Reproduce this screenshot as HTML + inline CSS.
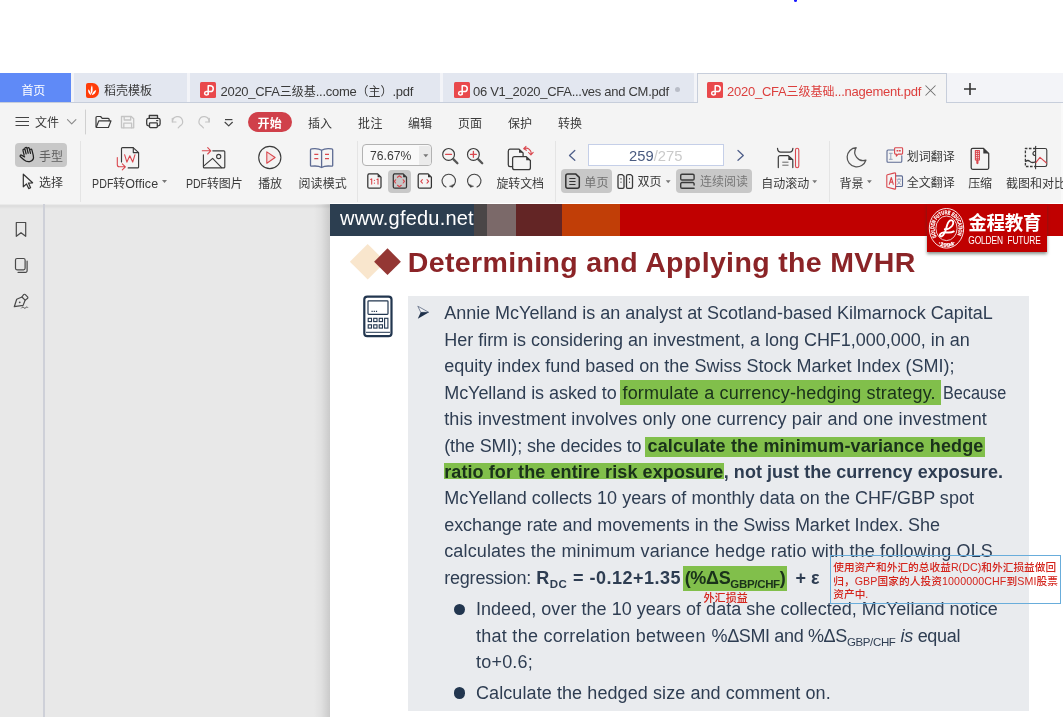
<!DOCTYPE html>
<html lang="zh">
<head>
<meta charset="utf-8">
<title>WPS PDF</title>
<style>
html,body{margin:0;padding:0;}
body{width:1063px;height:717px;overflow:hidden;position:relative;background:#fff;
  font-family:"Liberation Sans","Noto Sans CJK SC",sans-serif;font-size:12px;color:#3a3a3a;}
.abs{position:absolute;}
.t{position:absolute;white-space:nowrap;}
svg{position:absolute;overflow:visible;}
#tabbar{left:0;top:73px;width:1063px;height:29px;background:#f3f4f8;border-bottom:1px solid #c7cedb;}
.tab{position:absolute;top:0;height:29px;background:#e3e7f0;}
#tool{left:0;top:103px;width:1063px;height:100.500px;background:#f4f4f4;}
.sep{position:absolute;width:1px;background:#e4e4e4;top:141px;height:61px;}
.btnbg{position:absolute;background:#c8c8c8;border-radius:4px;}
#docbg{left:0;top:203.500px;width:1063px;height:514px;background:#e8e8e8;}
#page{left:330px;top:203.200px;width:733px;height:514px;background:#fff;}
.ln{position:absolute;white-space:nowrap;}
.sb{font-size:11.5px;position:relative;top:4px;}
.pdf{display:inline-block;font-size:12.5px;transform:scaleX(.85);transform-origin:0 50%;margin-right:-3.700px;}
.la{font-size:13px;letter-spacing:var(--ls);}
.hl{position:absolute;background:#8dd050;mix-blend-mode:multiply;}
b{font-weight:bold;}
</style>
</head>
<body>

<!-- top blue dot -->
<div class="abs" style="left:794px;top:-2px;width:3px;height:4px;border-radius:2px;background:#1a1aff;"></div>

<!-- ================= TAB BAR ================= -->
<div id="tabbar" class="abs">
  <div class="tab" style="left:0;width:71px;background:#5f8af7;"></div>
  <div class="tab" style="left:74px;width:113px;"></div>
  <div class="tab" style="left:190px;width:250px;"></div>
  <div class="tab" style="left:443px;width:251px;"></div>
  <div class="tab" style="left:697px;width:250px;height:30px;background:#f4f4f4;border:1px solid #c7cedb;border-bottom:none;box-sizing:border-box;"></div>
  <svg style="left:86px;top:10px;" width="13" height="15" viewBox="0 0 13 15"><path d="M2 0h4.500A6.500 6.500 0 0 1 13 6.500v2A6.500 6.500 0 0 1 6.500 15H2a2 2 0 0 1-2-2V2a2 2 0 0 1 2-2z" fill="#ff3d0a"/><path d="M5.500 11.300C4.300 8.300 4.600 5 5.900 2.300 7 5.200 6.900 8.400 5.500 11.300z" fill="#fff"/><path d="M5 12.200C3 11.300 1.900 9 2.100 6.300 3.900 7.600 5 9.700 5 12.200z" fill="#fff"/><path d="M5.700 12.200C6.300 9.600 7.800 7.800 10.200 6.900 9.900 9.600 8.300 11.500 5.700 12.200z" fill="#fff"/></svg>
  <svg style="left:200px;top:9px;" width="16" height="16" viewBox="0 0 16 16"><rect width="16" height="16" rx="1.500" fill="#e9494c"/><path d="M8.200 12.600V3.700h2.100a2.950 2.950 0 0 1 0 5.900H6.300a1.750 1.750 0 1 0 1.800 1.900" fill="none" stroke="#fff" stroke-width="1.500" stroke-linecap="round" stroke-linejoin="round"/></svg>
  <svg style="left:454px;top:9px;" width="16" height="16" viewBox="0 0 16 16"><rect width="16" height="16" rx="1.500" fill="#e9494c"/><path d="M8.200 12.600V3.700h2.100a2.950 2.950 0 0 1 0 5.900H6.300a1.750 1.750 0 1 0 1.800 1.900" fill="none" stroke="#fff" stroke-width="1.500" stroke-linecap="round" stroke-linejoin="round"/></svg>
  <div class="abs" style="left:675px;top:14px;width:5px;height:5px;border-radius:3px;background:#b9bdc7;"></div>
  <svg style="left:707px;top:9px;" width="16" height="16" viewBox="0 0 16 16"><rect width="16" height="16" rx="1.500" fill="#e9494c"/><path d="M8.200 12.600V3.700h2.100a2.950 2.950 0 0 1 0 5.900H6.300a1.750 1.750 0 1 0 1.800 1.900" fill="none" stroke="#fff" stroke-width="1.500" stroke-linecap="round" stroke-linejoin="round"/></svg>
  <svg style="left:925px;top:11.600px;" width="11" height="11" viewBox="0 0 11 11"><path d="M0.500 0.500l10 10M10.500 0.500l-10 10" stroke="#707070" stroke-width="1.050" fill="none"/></svg>
  <svg style="left:964px;top:10px;" width="12" height="12" viewBox="0 0 12 12"><path d="M6 0v12M0 6h12" stroke="#333" stroke-width="1.600" fill="none"/></svg>
</div>
<div class="t" id="tt1" style="left:21.60px;top:82.68px;font-size:12px;line-height:16px;height:16px;color:#fff;letter-spacing:-0.308px;">首页</div>
<div class="t" id="tt2" style="left:104.00px;top:83.28px;font-size:12px;line-height:16px;height:16px;color:#3a3a3a;">稻壳模板</div>
<div class="t" id="tt3" style="left:220.50px;top:83.58px;font-size:12px;line-height:16px;height:16px;color:#3a3a3a;--ls:-0.278px;"><span class="la">2020_CFA</span>三级基<span class="la">...come</span>（主）<span class="la">.pdf</span></div>
<div class="t" id="tt4" style="left:473.00px;top:83.58px;font-size:12px;line-height:16px;height:16px;color:#3a3a3a;--ls:-0.284px;"><span class="la">06 V1_2020_CFA...ves and CM.pdf</span></div>
<div class="t" id="tt5" style="left:727.00px;top:83.58px;font-size:12px;line-height:16px;height:16px;color:#dc3f3d;--ls:-0.252px;"><span class="la">2020_CFA</span>三级基础<span class="la">...nagement.pdf</span></div>

<!-- ================= MENU + TOOLBAR ================= -->
<div id="tool" class="abs"></div>
<svg style="left:0;top:103px;" width="300" height="40" viewBox="0 103 300 40" fill="none" stroke-linecap="round" stroke-linejoin="round">
  <path d="M15.500 117.500h13.500M15.500 121.500h13.500M15.500 125.500h13.500" stroke="#444" stroke-width="1.150" stroke-linecap="butt"/>
  <path d="M67.500 119.700l4.200 4.200 4.200-4.200" stroke="#8a8a8a" stroke-width="1.100"/>
  <path d="M85.500 110v24" stroke="#d0d0d0" stroke-width="1"/>
  <!-- open -->
  <path d="M96 126.500v-9a1 1 0 0 1 1-1h3.600l1.600 1.900h6a1 1 0 0 1 1 1v1.300" stroke="#3a3a3a" stroke-width="1.200"/>
  <path d="M96.200 127.500l2.600-6.600h12.200l-2.600 6.600z" stroke="#3a3a3a" stroke-width="1.200"/>
  <!-- save (disabled) -->
  <path d="M121.500 116.500h9.700l2.500 2.300v9h-12.200z" stroke="#c4c4c4" stroke-width="1.300"/>
  <path d="M124.200 116.800v3.200h6.500v-3.200M123.800 127.800v-4.600h7.800v4.600" stroke="#c4c4c4" stroke-width="1.300"/>
  <!-- print -->
  <rect x="146.700" y="118.300" width="13.400" height="7.600" rx="1.800" stroke="#3a3a3a" stroke-width="1.300"/>
  <path d="M149.300 118v-2.500h8.200v2.500" stroke="#3a3a3a" stroke-width="1.300"/>
  <rect x="149.500" y="122.800" width="7.800" height="4.800" rx=".8" fill="#f4f4f4" stroke="#3a3a3a" stroke-width="1.300"/>
  <path d="M156.600 120.600h1.200" stroke="#3a3a3a" stroke-width="1.200"/>
  <!-- undo -->
  <path d="M172.300 118.300v3.700h3.700" stroke="#c4c4c4" stroke-width="1.200"/>
  <path d="M172.600 121.800a5 5 0 1 1 7.200 4.300l-1.600 1.800" stroke="#c4c4c4" stroke-width="1.200"/>
  <!-- redo -->
  <path d="M209.300 118.300v3.700h-3.700" stroke="#c4c4c4" stroke-width="1.200"/>
  <path d="M209 121.800a5 5 0 1 0-7.200 4.300l1.600 1.800" stroke="#c4c4c4" stroke-width="1.200"/>
  <!-- more -->
  <path d="M225 119.600h7.400" stroke="#444" stroke-width="1.200" stroke-linecap="butt"/>
  <path d="M225 122.300l3.700 3.600 3.700-3.600" stroke="#444" stroke-width="1.200"/>
</svg>
<div class="abs" style="left:248px;top:112px;width:44px;height:20px;border-radius:10px;background:#d0404a;"></div>
<div class="t" id="m0" style="left:35.00px;top:114.88px;font-size:12px;line-height:16px;height:16px;color:#3a3a3a;letter-spacing:-0.008px;">文件</div>
<div class="t" id="m1" style="left:257.60px;top:115.58px;font-size:12px;line-height:16px;height:16px;color:#fff;letter-spacing:0.192px;font-weight:bold;">开始</div>
<div class="t" id="m2" style="left:308.00px;top:115.88px;font-size:12px;line-height:16px;height:16px;color:#3a3a3a;letter-spacing:-0.008px;">插入</div>
<div class="t" id="m3" style="left:358.00px;top:115.88px;font-size:12px;line-height:16px;height:16px;color:#3a3a3a;letter-spacing:0.492px;">批注</div>
<div class="t" id="m4" style="left:408.00px;top:115.88px;font-size:12px;line-height:16px;height:16px;color:#3a3a3a;letter-spacing:-0.008px;">编辑</div>
<div class="t" id="m5" style="left:458.00px;top:115.88px;font-size:12px;line-height:16px;height:16px;color:#3a3a3a;letter-spacing:-0.008px;">页面</div>
<div class="t" id="m6" style="left:508.00px;top:115.88px;font-size:12px;line-height:16px;height:16px;color:#3a3a3a;letter-spacing:-0.008px;">保护</div>
<div class="t" id="m7" style="left:558.00px;top:115.88px;font-size:12px;line-height:16px;height:16px;color:#3a3a3a;letter-spacing:-0.008px;">转换</div>

<div class="btnbg" style="left:15px;top:143px;width:52px;height:24px;"></div>
<div class="btnbg" style="left:388px;top:169.500px;width:23px;height:23px;"></div>
<div class="btnbg" style="left:560.700px;top:169.300px;width:51.700px;height:23.600px;"></div>
<div class="btnbg" style="left:675.700px;top:169px;width:76px;height:24px;"></div>
<div class="abs" style="left:1061px;top:103px;width:2px;height:100px;background:#f9f9f9;"></div>
<div class="sep" style="left:80px;"></div>
<div class="sep" style="left:357px;"></div>
<div class="sep" style="left:554.500px;"></div>
<div class="sep" style="left:829px;"></div>
<!-- zoom combo -->
<div class="abs" style="left:362px;top:144.200px;width:70.200px;height:21.500px;box-sizing:border-box;border:1.200px solid #b2b2b2;border-radius:4px;background:#f9f9f9;"></div>
<div class="abs" style="left:418.500px;top:145.500px;width:12.500px;height:19px;background:#ebebeb;border-radius:0 3px 3px 0;"></div>
<!-- page box -->
<div class="abs" style="left:588.200px;top:144.300px;width:135.400px;height:21.300px;box-sizing:border-box;border:1px solid #c5cfe8;background:#fff;"></div>

<svg style="left:0;top:138px;" width="1063" height="64" viewBox="0 138 1063 64" fill="none" stroke-linecap="round" stroke-linejoin="round" stroke-width="1.150">
  <!-- hand -->
  <g stroke="#222" stroke-width="1.250" transform="rotate(-14 27 155)">
    <path d="M24.200 154.500v-4.800a1.100 1.100 0 0 1 2.200 0v4M26.400 153.500v-5a1.100 1.100 0 0 1 2.200 0v5M28.600 153.600v-4.300a1.100 1.100 0 0 1 2.200 0v4.700M30.800 154.200v-2.800a1.100 1.100 0 0 1 2.200 0v5.400c0 3.200-2 5.200-5 5.200-2.600 0-3.800-1.200-5.200-3.200l-2.600-3.700c-.7-1 .7-2.100 1.600-1.200l2.400 2.300"/>
  </g>
  <!-- cursor -->
  <path d="M23.300 174.200v12.600l3.200-2.900 2.200 4.700 1.900-.9-2.200-4.600 4.200-.3z" stroke="#333" stroke-width="1.200"/>
  <!-- PDF to Office -->
  <path d="M121.500 162v-13.400a1 1 0 0 1 1-1h10.600l5.500 5v14.300a1 1 0 0 1-1 1h-9.400" stroke="#3a3a3a"/>
  <path d="M133.300 147.900v4.700h5" stroke="#3a3a3a"/>
  <path d="M124.600 154.700l2.300 7.400 2.900-6.400 2.900 6.400 2.300-7.400" stroke="#d9474e" stroke-width="1.100"/>
  <path d="M117.300 157.500v7.300a2 2 0 0 0 2 2h5.800M122.300 163.800l3.100 3-3.100 3" stroke="#d9474e" stroke-width="1.100"/>
  <!-- PDF to image -->
  <path d="M203.400 154.800v12.100a1 1 0 0 0 1 1h19.400a1 1 0 0 0 1-1v-15.100a1 1 0 0 0-1-1h-11" stroke="#3a3a3a"/>
  <circle cx="218.700" cy="156.500" r="2.100" stroke="#3a3a3a" stroke-width="1.100"/>
  <path d="M203.600 166.200l9-7.900 9 9.400" stroke="#3a3a3a" stroke-width="1.100"/>
  <path d="M202.300 150.800h8M207.700 147.600l3.100 3.200-3.100 3.200" stroke="#d9474e" stroke-width="1.100"/>
  <!-- play -->
  <circle cx="269.800" cy="157.500" r="11.100" stroke="#3a3a3a" stroke-width="1.100"/>
  <path d="M266.800 151.900v11.300l8.300-5.700z" stroke="#d9474e" stroke-width="1.100" fill="#f3dfdf"/>
  <!-- reading mode -->
  <path d="M321.600 150.300c-2.500-1.700-6.500-1.900-10.200-1.400a1 1 0 0 0-.9 1v15.300a1 1 0 0 0 1.100 1c3.400-.4 7.600-.2 10 1.300 2.400-1.500 6.600-1.700 10-1.300a1 1 0 0 0 1.100-1v-15.300a1 1 0 0 0-.9-1c-3.700-.5-7.700-.3-10.200 1.400zM321.600 150.500v16.800" stroke="#5d6b93" stroke-width="1.300"/>
  <path d="M314.300 154.300h4M314.300 158.700h4M325 154.300h4M325 158.700h4" stroke="#d9474e" stroke-width="1.300" stroke-linecap="butt"/>
  <!-- zoom dropdown arrow -->
  <path d="M423.300 154.300h5l-2.500 3z" fill="#777" stroke="none"/>
  <!-- zoom out / in -->
  <circle cx="448.600" cy="154.400" r="5.900" stroke="#3a3a3a"/><path d="M453.300 159.100l4.100 4.100" stroke="#555" stroke-width="2.300"/>
  <path d="M445.700 154.400h5.800" stroke="#d9474e" stroke-width="1.300"/>
  <circle cx="473.400" cy="154.400" r="5.900" stroke="#3a3a3a"/><path d="M478.100 159.100l4.100 4.100" stroke="#555" stroke-width="2.300"/>
  <path d="M470.500 154.400h5.800M473.400 151.500v5.800" stroke="#d9474e" stroke-width="1.300"/>
  <!-- 1:1 -->
  <path d="M368.7 173.900h9l3.300 3.200v9.600a1.500 1.500 0 0 1-1.500 1.500h-10.200a1.500 1.500 0 0 1-1.500-1.500v-11.300a1.500 1.500 0 0 1 1.500-1.500z" stroke="#333" stroke-width="1.250"/><path d="M377.6 174.100v3.200h3.200z" fill="#333" stroke="none"/>
  <path d="M370.700 179.500l1-.6v5.200M377 179.500l1-.6v5.200M374.400 180.200v.2M374.400 183v.2" stroke="#d9474e" stroke-width="1.100"/>
  <!-- fit page (selected) -->
  <path d="M394.2 173.900h9l3.300 3.200v9.600a1.500 1.500 0 0 1-1.500 1.500h-10.200a1.500 1.500 0 0 1-1.500-1.500v-11.300a1.500 1.500 0 0 1 1.500-1.500z" stroke="#333" stroke-width="1.250"/><path d="M403.1 174.100v3.200h3.200z" fill="#333" stroke="none"/>
  <path d="M397.500 177.300l1.900-1.500 1.900 1.500M397.500 185.300l1.900 1.500 1.900-1.500M395.600 179.800l-1.300 1.600 1.300 1.600M403.200 179.800l1.300 1.600-1.300 1.600" stroke="#d9474e" stroke-width="1.100"/>
  <!-- fit width -->
  <path d="M419.1 173.900h9l3.300 3.200v9.600a1.500 1.500 0 0 1-1.500 1.500h-10.200a1.500 1.500 0 0 1-1.500-1.500v-11.300a1.500 1.500 0 0 1 1.500-1.500z" stroke="#333" stroke-width="1.250"/><path d="M428.0 174.100v3.200h3.200z" fill="#333" stroke="none"/>
  <path d="M422.400 179.600l-1.600 1.800 1.600 1.800M427 179.600l1.600 1.800-1.600 1.800" stroke="#d9474e" stroke-width="1.100"/>
  <!-- rotate ccw / cw -->
  <path d="M452.300 186.600a6.700 6.700 0 1 0-6.300.4" stroke="#444" stroke-width="1.100"/><path d="M453.600 184.600l-1.100 2.700-2.800-.9z" fill="#444" stroke="#444" stroke-width=".5"/>
  <path d="M470.700 186.600a6.700 6.700 0 1 1 6.300.4" stroke="#444" stroke-width="1.100"/><path d="M469.400 184.600l1.100 2.700 2.800-.9z" fill="#444" stroke="#444" stroke-width=".5"/>
  <!-- rotate doc -->
  <path d="M512.600 166.700h-2.300a2 2 0 0 1-2-2v-13.500a2 2 0 0 1 2-2h8.800l4 3.800v3.300" stroke="#3a3a3a" stroke-width="1.250"/>
  <path d="M514.600 156.500h11.400l4.400 4v7.200a2 2 0 0 1-2 2h-13.800a2 2 0 0 1-2-2v-9.200a2 2 0 0 1 2-2z" stroke="#3a3a3a" stroke-width="1.250"/>
  <path d="M526.200 156.700v3.600h4z" fill="#3a3a3a" stroke="none"/>
  <path d="M519 149.400v3.400h3.900z" fill="#3a3a3a" stroke="none"/>
  <path d="M524 148.700a4.900 4.900 0 0 1 6.900 5.700M526 146.400l-2.300 2.300 2.700 1.600M528.600 152.500l2.300 2.500 2.300-2.600" stroke="#d9474e" stroke-width="1.100"/>
  <!-- page nav -->
  <path d="M574.800 150.500l-5.300 4.900 5.300 4.900" stroke="#4f5f8a" stroke-width="1.300"/>
  <path d="M738 150.500l5.300 4.900-5.300 4.900" stroke="#4f5f8a" stroke-width="1.300"/>
  <!-- single page -->
  <path d="M567.800 173.900h7.800l3.700 3.500v8.800a2 2 0 0 1-2 2h-9.500a2 2 0 0 1-2-2v-10.300a2 2 0 0 1 2-2z" stroke="#333" stroke-width="1.500"/>
  <path d="M569.300 178.500h6.200M569.300 181.500h6.200M569.300 184.500h6.200" stroke="#333" stroke-width="1.200" stroke-linecap="butt"/>
  <!-- double page -->
  <path d="M618 176.300a1.700 1.700 0 0 1 1.700-1.700h2.600l1.700 1.600v10.800a1.300 1.300 0 0 1-1.300 1.300h-3.400a1.300 1.300 0 0 1-1.300-1.300zM626.500 176.300a1.700 1.700 0 0 1 1.700-1.700h2.600l1.700 1.600v10.800a1.300 1.300 0 0 1-1.300 1.300h-3.400a1.300 1.300 0 0 1-1.300-1.300z" stroke="#3a3a3a" stroke-width="1.300"/>
  <path d="M621 178.700v.2M621 182v.2M629.500 178.700v.2M629.500 182v.2" stroke="#3a3a3a" stroke-width="1.200"/>
  <path d="M665.800 180.300h4.800l-2.400 2.900z" fill="#777" stroke="none"/>
  <!-- continuous -->
  <rect x="680.700" y="174.200" width="13.400" height="5.800" rx="1.300" stroke="#3a3a3a" stroke-width="1.400"/>
  <path d="M694.100 188.300h-12.100a1.300 1.300 0 0 1-1.300-1.300v-3.200a1.300 1.300 0 0 1 1.300-1.300h10.800a1.300 1.300 0 0 1 1.300 1.300v1.300" stroke="#3a3a3a" stroke-width="1.400"/>
  <!-- auto scroll -->
  <path d="M777.500 148.400c.3 2.700 1.400 3.800 3.200 3.800h9c1.800 0 2.900-1.100 3.200-3.800" stroke="#3a3a3a" stroke-width="1.200"/>
  <path d="M778.300 167.600v-10.300a1.700 1.700 0 0 1 1.700-1.700h8.300l4.500 4.200v7.800" stroke="#3a3a3a" stroke-width="1.200"/>
  <path d="M788.300 155.800v4.200h4.300z" fill="#3a3a3a" stroke="none"/>
  <path d="M782.300 162.200h6.200M782.300 165.200h6.200" stroke="#666" stroke-width="1" stroke-linecap="butt"/>
  <rect x="795.500" y="148.300" width="3.300" height="19.400" rx="1.650" stroke="#d9474e" stroke-width="1.100"/>
  <path d="M812.300 180.300h4.800l-2.400 2.900z" fill="#777" stroke="none"/>
  <!-- background (moon) -->
  <path d="M856.200 147.700a9.600 9.600 0 1 0 9.700 12.500 8.400 8.400 0 0 1-9.700-12.500z" stroke="#555" stroke-width="1.250"/>
  <path d="M867 180.300h4.800l-2.400 2.900z" fill="#777" stroke="none"/>
  <!-- word translate -->
  <path d="M893.800 150h-5.800a1 1 0 0 0-1 1v10.300a1 1 0 0 0 1 1h12.800a1 1 0 0 0 1-1v-5.500" stroke="#5d6b93" stroke-width="1.100"/>
  <path d="M889.300 153.300h3M889.300 159.300h3M890.800 153.300v6" stroke="#9aa4bb" stroke-width="1"/>
  <path d="M895.400 147.700h6.400a.8.800 0 0 1 .8.800v4.800a.8.800 0 0 1-.8.800h-3.600l-1.900 2v-2h-.9a.8.800 0 0 1-.8-.8v-4.800a.8.800 0 0 1 .8-.8z" stroke="#d9474e" stroke-width="1.100" fill="#f4f4f4"/>
  <path d="M897.300 150.700h.3M899.700 150.700h.3" stroke="#d9474e" stroke-width="1.500" stroke-linecap="square"/>
  <!-- full translate -->
  <path d="M895.500 175.900h6a1 1 0 0 1 1 1v8.600a1 1 0 0 1-1 1h-6" stroke="#5d6b93" stroke-width="1.100"/>
  <path d="M897 179.300h4M899 178.400v.9M897.600 180.700c.5 1.700 1.500 2.800 3.200 3.600M900.400 180.700c-.5 1.700-1.500 2.800-3.200 3.600" stroke="#8a96b3" stroke-width=".8"/>
  <path d="M887.400 174.700l7.300-1.800a.7.700 0 0 1 .9.700v14.800a.7.700 0 0 1-.9.700l-7.300-1.800a.8.800 0 0 1-.6-.8v-11a.8.800 0 0 1 .6-.8z" stroke="#d9474e" stroke-width="1.100" fill="#f4f4f4"/>
  <path d="M889.300 184.300l2-6.800 2 6.800M890 182.100h2.700" stroke="#d9474e" stroke-width="1.100"/>
  <!-- compress -->
  <path d="M972.700 148.300h10.600l5.400 5.200v14.300a1.500 1.500 0 0 1-1.500 1.500h-14.500a1.500 1.500 0 0 1-1.500-1.500v-18a1.500 1.500 0 0 1 1.500-1.500z" stroke="#3a3a3a" stroke-width="1.250"/>
  <path d="M983.300 148.600v5h5.200z" fill="#3a3a3a" stroke="none"/>
  <rect x="975.400" y="150.600" width="4" height="9.400" stroke="#d9474e" stroke-width="1.100"/>
  <path d="M975.400 152.600h4M975.400 154.500h4M975.400 156.400h4M975.400 158.300h4M977.400 150.600v9.400" stroke="#d9474e" stroke-width=".9" stroke-linecap="butt"/>
  <path d="M977.400 160.300v2.800" stroke="#d9474e" stroke-width="2.200"/>
  <!-- screenshot & compare -->
  <path d="M1035.600 148.500h-10.200v18h10.200" stroke="#3a3a3a" stroke-width="1.300" stroke-dasharray="2.600 1.500" stroke-linecap="butt"/>
  <path d="M1035.600 148.500h9.500a1.700 1.700 0 0 1 1.700 1.700v14.600a1.700 1.700 0 0 1-1.700 1.700h-9.500" stroke="#3a3a3a" stroke-width="1.100"/>
  <path d="M1035.600 146.200v22.600" stroke="#3a3a3a" stroke-width="1.100"/>
  <path d="M1035.400 151.500a2 2 0 1 0 0 3.900" stroke="#3a3a3a" stroke-width="1.200"/>
  <path d="M1025.600 161.600c1.700-1.600 2.900-1.500 4.200-.2s3 1.500 5.600.4" stroke="#3a3a3a" stroke-width="1.300"/>
  <path d="M1036 162.300l4-5 6.500 5.700" stroke="#d9474e" stroke-width="1.100"/>
</svg>
<div class="t" id="b1" style="left:39.00px;top:149.18px;font-size:12px;line-height:16px;height:16px;color:#5e5e5e;letter-spacing:-0.008px;">手型</div>
<div class="t" id="b2" style="left:39.00px;top:175.28px;font-size:12px;line-height:16px;height:16px;color:#3a3a3a;letter-spacing:-0.008px;">选择</div>
<div class="t" id="b3" style="left:91.70px;top:176.08px;font-size:12px;line-height:16px;height:16px;color:#3a3a3a;letter-spacing:0.075px;"><span class="pdf">PDF</span>转<span style="font-size:12.5px">Office</span></div>
<svg style="left:162px;top:180px;" width="5" height="3" viewBox="0 0 5 3"><path d="M0 0h5l-2.500 3z" fill="#777"/></svg>
<div class="t" id="b4" style="left:186.00px;top:176.08px;font-size:12px;line-height:16px;height:16px;color:#3a3a3a;letter-spacing:-0.121px;"><span class="pdf">PDF</span>转图片</div>
<div class="t" id="b5" style="left:258.20px;top:176.08px;font-size:12px;line-height:16px;height:16px;color:#3a3a3a;letter-spacing:-0.108px;">播放</div>
<div class="t" id="b6" style="left:298.50px;top:176.08px;font-size:12px;line-height:16px;height:16px;color:#3a3a3a;letter-spacing:0.071px;">阅读模式</div>
<div class="t" id="b7" style="left:369.70px;top:147.52px;font-size:13.5px;line-height:16px;height:16px;color:#3a3a3a;transform:scaleX(0.9018);transform-origin:0 50%;">76.67%</div>
<div class="t" id="b8" style="left:496.50px;top:176.08px;font-size:12px;line-height:16px;height:16px;color:#3a3a3a;letter-spacing:-0.129px;">旋转文档</div>
<div class="t" id="b9" style="left:628.80px;top:146.80px;font-size:15px;line-height:18px;height:18px;color:#4a5b80;transform:scaleX(0.9846);transform-origin:0 50%;"><span style="color:#4a5b80">259</span><span style="color:#cacaca">/275</span></div>
<div class="t" id="b10" style="left:584.30px;top:174.58px;font-size:12px;line-height:16px;height:16px;color:#707070;letter-spacing:0.142px;">单页</div>
<div class="t" id="b11" style="left:637.50px;top:174.28px;font-size:12px;line-height:16px;height:16px;color:#3a3a3a;letter-spacing:0.092px;">双页</div>
<div class="t" id="b12" style="left:699.90px;top:174.28px;font-size:12px;line-height:16px;height:16px;color:#777;letter-spacing:0.021px;">连续阅读</div>
<div class="t" id="b13" style="left:761.30px;top:176.08px;font-size:12px;line-height:16px;height:16px;color:#3a3a3a;letter-spacing:-0.029px;">自动滚动</div>
<div class="t" id="b14" style="left:839.60px;top:175.78px;font-size:12px;line-height:16px;height:16px;color:#3a3a3a;letter-spacing:-0.058px;">背景</div>
<div class="t" id="b15" style="left:906.70px;top:148.78px;font-size:12px;line-height:16px;height:16px;color:#3a3a3a;letter-spacing:0.046px;">划词翻译</div>
<div class="t" id="b16" style="left:906.70px;top:174.98px;font-size:12px;line-height:16px;height:16px;color:#3a3a3a;letter-spacing:0.046px;">全文翻译</div>
<div class="t" id="b17" style="left:968.30px;top:176.08px;font-size:12px;line-height:16px;height:16px;color:#3a3a3a;letter-spacing:-0.258px;">压缩</div>
<div class="t" id="b18" style="left:1006.00px;top:176.08px;font-size:12px;line-height:16px;height:16px;color:#3a3a3a;">截图和对比</div>

<!-- ================= DOCUMENT AREA ================= -->
<div id="docbg" class="abs"></div>
<div class="abs" style="left:0;top:203.500px;width:1063px;height:5px;background:linear-gradient(#f0f0f0 0%,#dbdbdb 35%,#e8e8e8 100%);"></div>
<div class="abs" style="left:43.200px;top:204px;width:2px;height:513px;background:#ced0d8;"></div>
<svg style="left:0;top:204px;" width="44" height="120" viewBox="0 204 44 120" fill="none" stroke="#4a4a4a" stroke-width="1.200" stroke-linejoin="round" stroke-linecap="round">
  <path d="M16.300 222.500h9.400v13.800l-4.700-3.600-4.700 3.600z"/>
  <rect x="15.500" y="258.500" width="9.600" height="11.300" rx="1.500"/>
  <path d="M18 272.300h7.600a1.500 1.500 0 0 0 1.500-1.500v-9.600"/>
  <path d="M14.300 306.700l2.400-7.500 5.200-2.200 3.200 3.200-2 5.200z"/>
  <path d="M21.900 297l1.700-2.300a1.200 1.200 0 0 1 1.800-.1l2.100 2.200a1.200 1.200 0 0 1-.1 1.800l-2.300 1.600"/>
  <circle cx="19.700" cy="302.300" r=".9" fill="#4a4a4a" stroke="none"/>
  <path d="M21.500 308c.9-1.300 1.700-1.300 2.300-.4s1.500 1 2.100 0 1.200-1 1.700-.3" stroke-width="1"/>
</svg>

<div class="abs" style="left:314px;top:204px;width:16px;height:513px;background:linear-gradient(to right,rgba(0,0,0,0),rgba(0,0,0,.035) 45%,rgba(0,0,0,.13));"></div>
<div id="page" class="abs"></div>
<!-- slide header band -->
<div class="abs" style="left:330px;top:204.300px;width:144px;height:31.300px;background:#2c3e50;"></div>
<div class="abs" style="left:474px;top:204.300px;width:13px;height:31.300px;background:#4a4647;"></div>
<div class="abs" style="left:487px;top:204.300px;width:29px;height:31.300px;background:#7b6969;"></div>
<div class="abs" style="left:516px;top:204.300px;width:46px;height:31.300px;background:#632525;"></div>
<div class="abs" style="left:562px;top:204.300px;width:58px;height:31.300px;background:#c13e07;"></div>
<div class="abs" style="left:620px;top:204.300px;width:443px;height:31.300px;background:#c00000;"></div>
<div class="t" id="www" style="left:340.00px;top:204.87px;font-size:20px;line-height:26px;height:26px;color:#fff;letter-spacing:0.200px;">www.gfedu.net</div>
<!-- logo -->
<div class="abs" style="left:927px;top:204.300px;width:120px;height:47.500px;background:#c00000;box-shadow:0 2px 3px rgba(40,60,50,.55);"></div>
<svg style="left:927px;top:204px;" width="40" height="48" viewBox="927 204 40 48" fill="none">
  <ellipse cx="946.500" cy="228.300" rx="17.200" ry="19.800" stroke="#fff" stroke-width=".9"/>
  <ellipse cx="946.500" cy="228.300" rx="10.600" ry="12.300" stroke="#fff" stroke-width=".8"/>
  <path id="ringtop" d="M936.840 236.790A12.100 14.100 0 1 1 956.760 235.770"/>
  <path id="ringbot" d="M937.50 243.72A16.1 18.6 0 0 0 955.50 243.72"/>
  <text font-size="5.400" font-weight="bold" fill="#fff" stroke="#fff" stroke-width=".25" font-family="Liberation Sans, sans-serif"><textPath href="#ringtop" textLength="56.500" lengthAdjust="spacingAndGlyphs">GOLDEN FUTURE EDUCATION</textPath></text>
  <text font-size="5.300" font-weight="bold" fill="#fff" stroke="#fff" stroke-width=".2" font-family="Liberation Sans, sans-serif"><textPath href="#ringbot" startOffset=".300" textLength="19.500" lengthAdjust="spacingAndGlyphs">·1994·</textPath></text>
  <path d="M953.800 231.400C950 233.600 946.500 232 943.500 232.400C940.500 232.900 939 235.200 940.300 236.200C941.900 237.300 944.500 234 945.800 230C947 226 947.300 221.600 950.300 220.400C953.300 219.500 954.300 223 952 226C950 228.300 947.200 229.600 944.800 229.300" stroke="#fff" stroke-width="1.900" stroke-linecap="round"/>
</svg>
<div class="t" id="lg1" style="left:968.30px;top:211.99px;font-size:18.5px;line-height:24px;height:24px;color:#fff;letter-spacing:-0.279px;font-weight:bold;transform:scaleY(1.07);transform-origin:0 70%;">金程教育</div>
<div class="t" id="lg2" style="left:968.30px;top:234.89px;font-size:8.4px;line-height:12px;height:12px;color:#fff;letter-spacing:-0.144px;word-spacing:2.5px;transform:scaleY(1.19);transform-origin:0 77%;">GOLDEN FUTURE</div>
<!-- title -->
<svg style="left:348px;top:242px;" width="56" height="40" viewBox="348 242 56 40">
  <path d="M349.900 261.700l17.800-17.800 17.800 17.800-17.800 17.800z" fill="#f9e6cd"/>
  <path d="M374.100 261.700l13.400-13.400 13.400 13.400-13.400 13.400z" fill="#943734"/>
</svg>
<div class="t" id="title" style="left:407.80px;top:244.12px;font-size:28.5px;line-height:36px;height:36px;color:#8b2427;letter-spacing:0.354px;font-weight:bold;">Determining and Applying the MVHR</div>
<!-- calculator icon -->
<svg style="left:362px;top:294px;" width="32" height="45" viewBox="362 294 32 45" fill="none" stroke="#22364f">
  <rect x="364.300" y="296.600" width="27.200" height="39.600" rx="3" stroke-width="2.200"/>
  <rect x="368" y="300.800" width="20" height="13.600" rx=".8" stroke-width="1.200"/>
  <path d="M371.500 311.300h1.200M373.700 311.300h1.200M375.900 311.300h1.200" stroke-width="1.200"/>
  <g stroke-width="1.100">
   <rect x="368.200" y="318.300" width="3.300" height="3.300"/><rect x="373.700" y="318.300" width="3.300" height="3.300"/><rect x="379.200" y="318.300" width="3.300" height="3.300"/>
   <rect x="368.200" y="324.800" width="3.300" height="3.300"/><rect x="373.700" y="324.800" width="3.300" height="3.300"/><rect x="379.200" y="324.800" width="3.300" height="3.300"/>
   <rect x="384.600" y="318.300" width="3.300" height="9.800"/>
  </g>
  <path d="M366 332.300h24" stroke-width="1"/>
</svg>
<!-- text box -->
<div class="abs" style="left:408.400px;top:295.600px;width:621.100px;height:415.800px;background:#e9ebee;"></div>
<svg style="left:416px;top:305px;" width="14" height="15" viewBox="416 305 14 15"><path d="M417.800 306.200L428.600 312.200L420.800 312.400Z" fill="#f1f2f4" stroke="#6d7990" stroke-width=".9" stroke-linejoin="round"/><path d="M417.800 318.800L429 312.300L420.700 312.300Z" fill="#1d2f48"/></svg>
<div class="abs" style="left:454px;top:603.800px;width:11.200px;height:11.200px;border-radius:6px;background:#22364f;"></div>
<div class="abs" style="left:454px;top:687.400px;width:11.200px;height:11.200px;border-radius:6px;background:#22364f;"></div>
<div class="ln" id="l1" style="left:444.20px;top:300.00px;font-size:18px;line-height:26px;height:26px;color:#2e3d52;letter-spacing:-0.018px;">Annie McYelland is an analyst at Scotland-based Kilmarnock CapitaL</div>
<div class="ln" id="l2" style="left:444.20px;top:327.00px;font-size:18px;line-height:26px;height:26px;color:#2e3d52;letter-spacing:-0.010px;">Her firm is considering an investment, a long CHF1,000,000, in an</div>
<div class="ln" id="l3" style="left:444.20px;top:353.00px;font-size:18px;line-height:26px;height:26px;color:#2e3d52;">equity index fund based on the Swiss Stock Market Index (SMI);</div>
<div class="ln" id="l4a" style="left:444.20px;top:380.00px;font-size:18px;line-height:26px;height:26px;color:#2e3d52;letter-spacing:-0.045px;">McYelland is asked to</div>
<div class="ln" id="l4b" style="left:622.50px;top:380.00px;font-size:18px;line-height:26px;height:26px;color:#2e3d52;letter-spacing:0.168px;">formulate a currency-hedging strategy.</div>
<div class="ln" id="l4c" style="left:943.20px;top:380.00px;font-size:18px;line-height:26px;height:26px;color:#2e3d52;transform:scaleX(0.9021);transform-origin:0 50%;">Because</div>
<div class="ln" id="l5" style="left:444.20px;top:406.00px;font-size:18px;line-height:26px;height:26px;color:#2e3d52;letter-spacing:0.128px;">this investment involves only one currency pair and one investment</div>
<div class="ln" id="l6a" style="left:444.20px;top:433.00px;font-size:18px;line-height:26px;height:26px;color:#2e3d52;letter-spacing:-0.112px;">(the SMI); she decides to</div>
<div class="ln" id="l6b" style="left:647.50px;top:433.00px;font-size:18px;line-height:26px;height:26px;color:#2e3d52;letter-spacing:0.135px;font-weight:bold;">calculate the minimum-variance hedge</div>
<div class="ln" id="l7a" style="left:444.20px;top:459.00px;font-size:18px;line-height:26px;height:26px;color:#2e3d52;letter-spacing:0.091px;font-weight:bold;">ratio for the entire risk exposure</div>
<div class="ln" id="l7b" style="left:723.80px;top:459.00px;font-size:18px;line-height:26px;height:26px;color:#2e3d52;letter-spacing:0.034px;font-weight:bold;">, not just the currency exposure.</div>
<div class="ln" id="l8" style="left:444.20px;top:485.00px;font-size:18px;line-height:26px;height:26px;color:#2e3d52;letter-spacing:0.024px;">McYelland collects 10 years of monthly data on the CHF/GBP spot</div>
<div class="ln" id="l9" style="left:444.20px;top:512.00px;font-size:18px;line-height:26px;height:26px;color:#2e3d52;letter-spacing:-0.060px;">exchange rate and movements in the Swiss Market Index. She</div>
<div class="ln" id="l10" style="left:444.20px;top:538.00px;font-size:18px;line-height:26px;height:26px;color:#2e3d52;letter-spacing:0.144px;">calculates the minimum variance hedge ratio with the following OLS</div>
<div class="ln" id="l11a" style="left:444.20px;top:565.00px;font-size:18px;line-height:26px;height:26px;color:#2e3d52;letter-spacing:-0.204px;">regression:</div>
<div class="ln" id="l11b" style="left:536.30px;top:565.00px;font-size:18px;line-height:26px;height:26px;color:#2e3d52;letter-spacing:0.499px;font-weight:bold;">R<span class="sb">DC</span> = -0.12+1.35</div>
<div class="ln" id="l11c" style="left:684.70px;top:565.00px;font-size:18px;line-height:26px;height:26px;color:#2e3d52;letter-spacing:-0.325px;font-weight:bold;">(%ΔS<span class="sb">GBP/CHF</span>)</div>
<div class="ln" id="l11d" style="left:795.60px;top:565.00px;font-size:18px;line-height:26px;height:26px;color:#2e3d52;letter-spacing:-0.088px;font-weight:bold;">+ ε</div>
<div class="ln" id="q1" style="left:476.00px;top:596.00px;font-size:18px;line-height:26px;height:26px;color:#2e3d52;letter-spacing:0.033px;">Indeed, over the 10 years of data she collected, McYelland notice</div>
<div class="ln" id="q2a" style="left:476.00px;top:623.00px;font-size:18px;line-height:26px;height:26px;color:#2e3d52;letter-spacing:0.269px;">that the correlation between</div>
<div class="ln" id="q2b" style="left:711.50px;top:623.00px;font-size:18px;line-height:26px;height:26px;color:#2e3d52;letter-spacing:-0.362px;">%ΔSMI and %ΔS<span class="sb">GBP/CHF</span></div>
<div class="ln" id="q2c" style="left:900.50px;top:623.00px;font-size:18px;line-height:26px;height:26px;color:#2e3d52;letter-spacing:-0.293px;"><i>is</i> equal</div>
<div class="ln" id="q3" style="left:476.00px;top:649.00px;font-size:18px;line-height:26px;height:26px;color:#2e3d52;letter-spacing:0.208px;">to+0.6;</div>
<div class="ln" id="q4" style="left:476.00px;top:680.00px;font-size:18px;line-height:26px;height:26px;color:#2e3d52;letter-spacing:0.087px;">Calculate the hedged size and comment on.</div>
<!-- highlights -->
<div class="hl" style="left:619.800px;top:379.800px;width:321.200px;height:25px;"></div>
<div class="hl" style="left:645.200px;top:436.800px;width:339.800px;height:20.700px;"></div>
<div class="hl" style="left:444px;top:463.100px;width:279.800px;height:16px;"></div>
<div class="hl" style="left:682.700px;top:566.400px;width:104.100px;height:25.100px;"></div>
<!-- annotations -->
<div class="abs" style="left:830px;top:555px;width:231px;height:49px;box-sizing:border-box;border:1px solid #69addb;"></div>
<div class="t" id="a0" style="left:703.50px;top:591.39px;font-size:11px;line-height:14px;height:14px;color:#d4241c;letter-spacing:0.125px;font-weight:500;">外汇损益</div>
<div class="t" id="a1" style="left:833.20px;top:559.80px;font-size:10.67px;line-height:14px;height:14px;color:#d4241c;letter-spacing:0.043px;font-weight:500;">使用资产和外汇的总收益R(DC)和外汇损益做回</div>
<div class="t" id="a2" style="left:833.20px;top:573.50px;font-size:10.67px;line-height:14px;height:14px;color:#d4241c;letter-spacing:0.101px;font-weight:500;">归，GBP国家的人投资1000000CHF到SMI股票</div>
<div class="t" id="a3" style="left:833.20px;top:587.40px;font-size:10.67px;line-height:14px;height:14px;color:#d4241c;letter-spacing:0.066px;font-weight:500;">资产中.</div>
</body>
</html>
